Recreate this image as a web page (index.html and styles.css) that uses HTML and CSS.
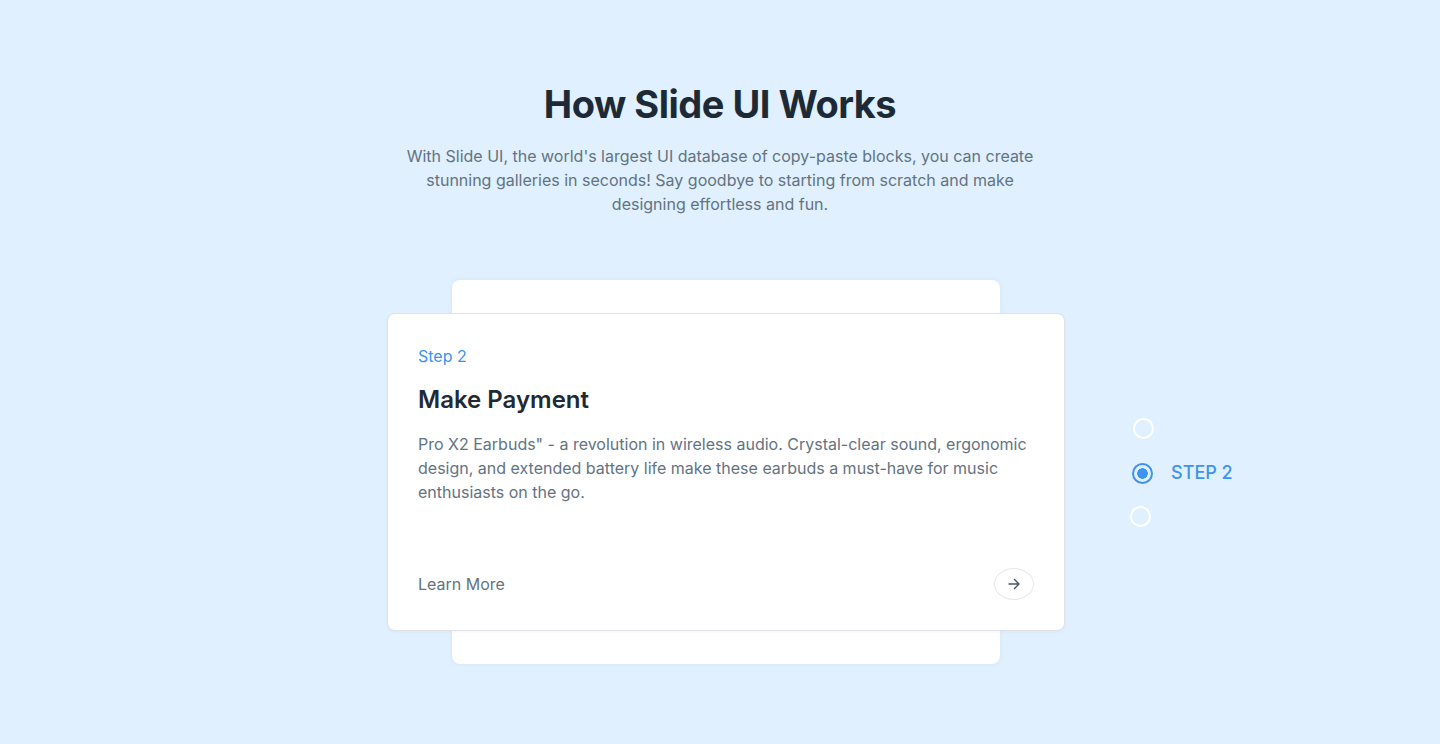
FILE: index.html
```html
<!DOCTYPE html>
<html lang="en">
<head>
<meta charset="utf-8">
<title>How Slide UI Works</title>
<link rel="stylesheet" href="styles.css">
</head>
<body>
<section class="section">
  <header class="intro">
    <h1 class="title">How Slide UI Works</h1>
    <p class="lead">With Slide UI, the world's largest UI database of copy-paste blocks, you can create stunning galleries in seconds! Say goodbye to starting from scratch and make designing effortless and fun.</p>
  </header>
  <div class="showcase">
    <div class="stack">
      <div class="card-back"></div>
      <article class="card">
        <span class="card-step">Step 2</span>
        <h2 class="card-title">Make Payment</h2>
        <p class="card-text">Pro X2 Earbuds" - a revolution in wireless audio. Crystal-clear sound, ergonomic design, and extended battery life make these earbuds a must-have for music enthusiasts on the go.</p>
        <div class="card-footer">
          <span class="card-link">Learn More</span>
          <button class="arrow-btn" type="button" aria-label="Next">
            <svg width="14" height="14" viewBox="0 0 14 14" fill="none" stroke="currentColor" stroke-width="1.4" stroke-linecap="round" stroke-linejoin="round"><path d="M2 7h10M7.5 2.5L12 7l-4.5 4.5"/></svg>
          </button>
        </div>
      </article>
    </div>
    <ul class="steps">
      <li class="step"><span class="dot dot-first"></span></li>
      <li class="step step-active"><span class="dot"></span><span class="step-label">STEP 2</span></li>
      <li class="step"><span class="dot dot-last"></span></li>
    </ul>
  </div>
</section>
</body>
</html>
```

FILE: styles.css
```css
* { box-sizing: border-box; }
html, body { margin: 0; padding: 0; }
body {
  background: #e0f0fe;
  font-family: Inter, "Noto Sans", Arial, sans-serif;
  color: #637381;
  height: 744px;
  overflow: hidden;
}
.section {
  padding-top: 80px;
}
.intro {
  display: flex;
  flex-direction: column;
  align-items: center;
  text-align: center;
}
.title {
  margin: 0;
  font-size: 38px;
  line-height: 48px;
  font-weight: 700;
  color: #1d2a35;
  letter-spacing: -0.5px;
}
.lead {
  margin: 16px 0 0;
  max-width: 640px;
  font-size: 16px;
  line-height: 24px;
  color: #637381;
}
.showcase {
  margin-top: 64px;
  display: grid;
  grid-template-columns: 1fr 678px 1fr;
  padding-left: 12px;
  align-items: center;
}
.stack {
  grid-column: 2;
  display: grid;
  align-items: center;
  justify-items: center;
}
.card-back, .card { grid-area: 1 / 1; }
.card-back {
  width: 548px;
  height: 384px;
  background: #fff;
  border-radius: 8px;
  box-shadow: 0 0 4px rgba(180, 205, 230, 0.35);
}
.card {
  width: 678px;
  height: 318px;
  background: #fff;
  border: 1px solid #dfe3e8;
  border-radius: 8px;
  padding: 30px;
  display: flex;
  flex-direction: column;
  box-shadow: 0 1px 3px rgba(120, 140, 170, 0.08);
}
.card-step {
  font-size: 16px;
  line-height: 24px;
  color: #3d93ef;
}
.card-title {
  margin: 16px 0 0;
  font-size: 24px;
  line-height: 32px;
  font-weight: 600;
  color: #1f2a37;
}
.card-text {
  margin: 16px 0 0;
  font-size: 16px;
  line-height: 24px;
  color: #637381;
}
.card-footer {
  margin-top: auto;
  display: flex;
  align-items: center;
  justify-content: space-between;
}
.card-link {
  font-size: 16px;
  line-height: 24px;
  color: #637381;
}
.arrow-btn {
  width: 40px;
  height: 32px;
  border-radius: 50%;
  border: 1px solid #e6e8eb;
  background: #fff;
  color: #4b5563;
  display: flex;
  align-items: center;
  justify-content: center;
  padding: 0;
  margin-right: 0;
}
.steps {
  grid-column: 3;
  list-style: none;
  margin: 0;
  padding: 0 0 0 67px;
  display: flex;
  flex-direction: column;
}
.step {
  height: 44px;
  display: flex;
  align-items: center;
  gap: 18px;
}
.step-active { padding-top: 2px; }
.dot {
  width: 21px;
  height: 21px;
  border-radius: 50%;
  border: 2px solid #fff;
  flex: none;
}
.dot-first { margin-left: 1px; }
.dot-last { margin-left: -2px; }
.step-active .dot {
  border-color: #3d93ef;
  background: radial-gradient(circle, #3d93ef 0 5px, transparent 5.5px);
}
.step-label {
  font-size: 18px;
  line-height: 24px;
  font-weight: 500;
  color: #3d93ef;
}
```
